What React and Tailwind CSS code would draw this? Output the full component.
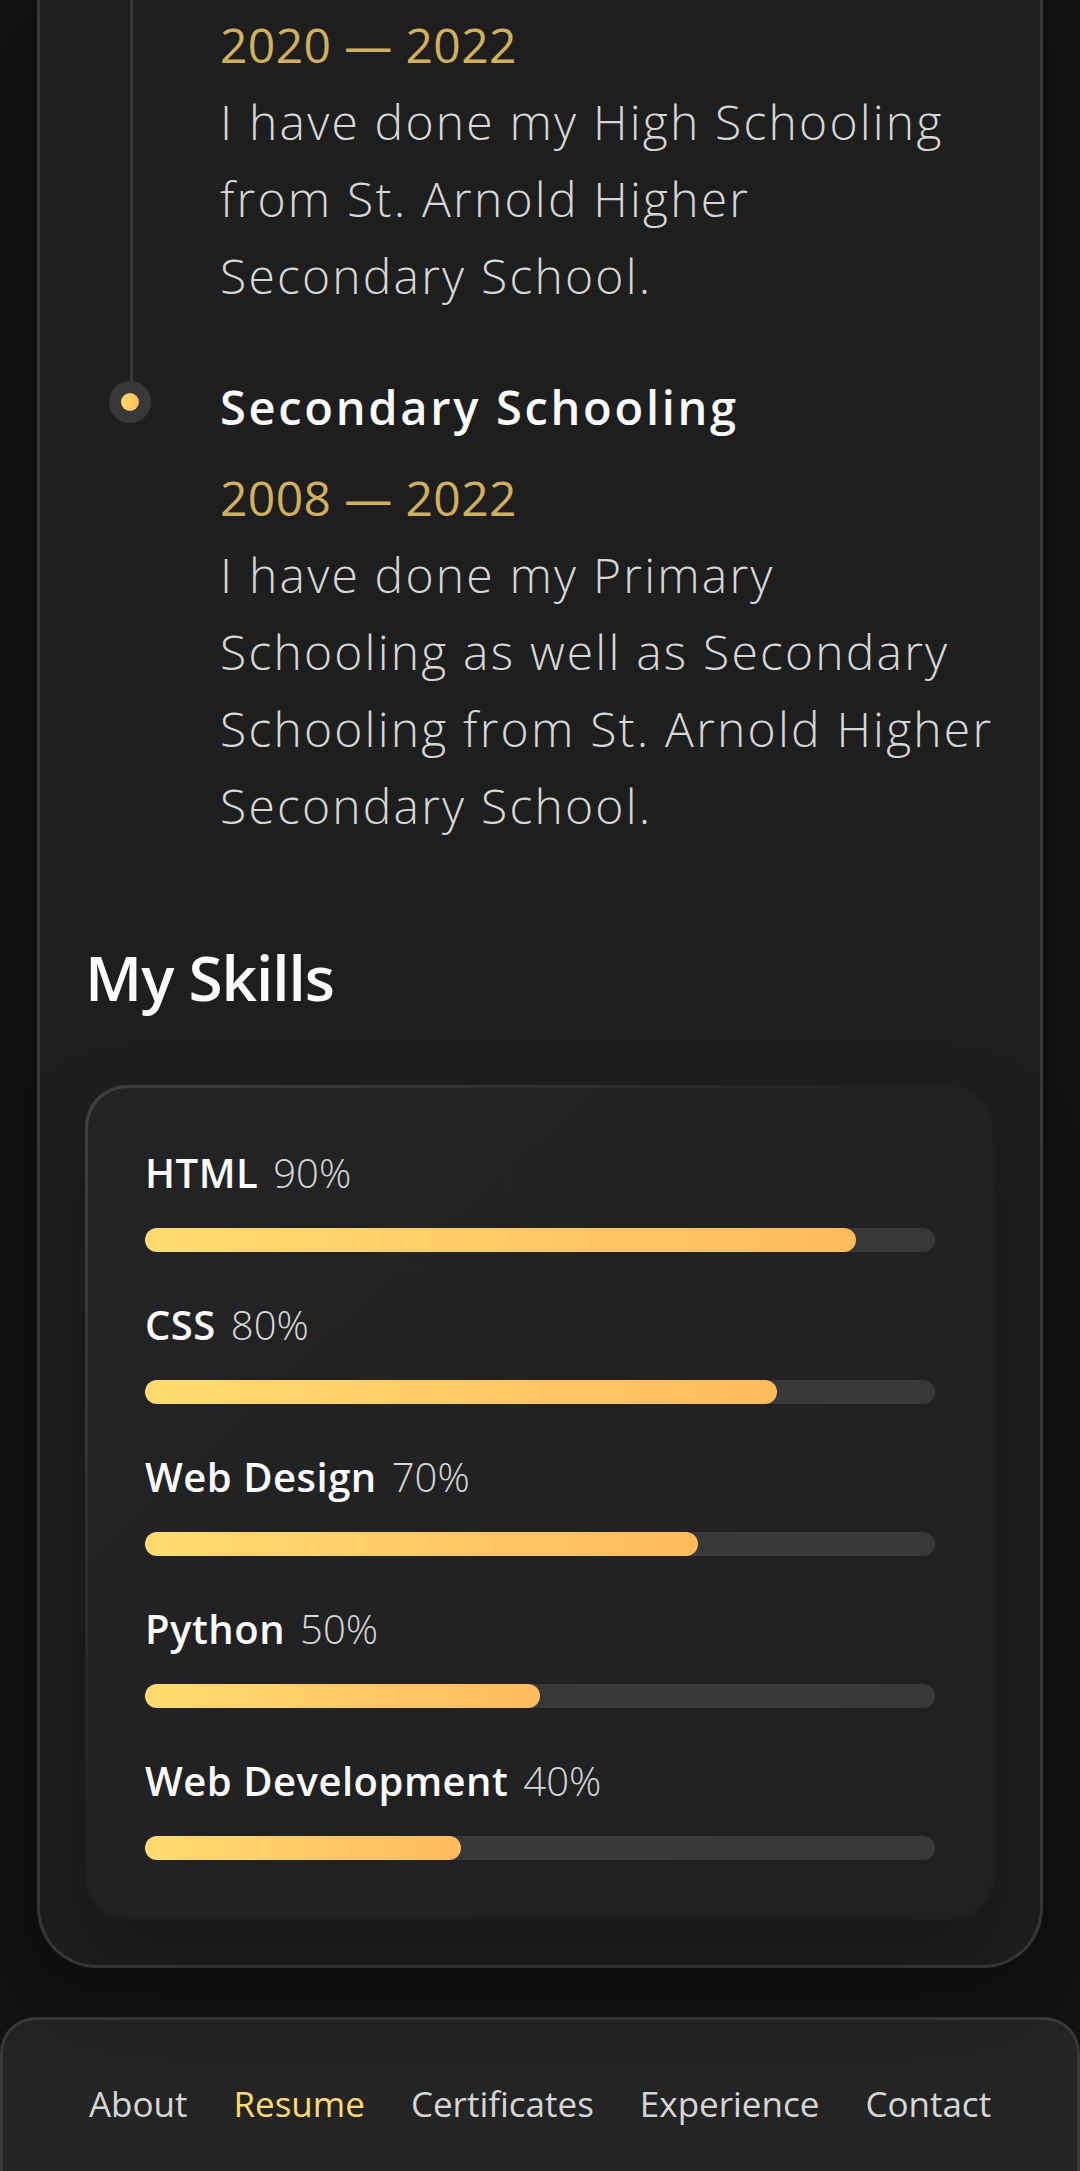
import React from "react";

const skills = [
  { name: "HTML", value: 90 },
  { name: "CSS", value: 80 },
  { name: "Web Design", value: 70 },
  { name: "Python", value: 50 },
  { name: "Web Development", value: 40 },
];

const links = ["About", "Resume", "Certificates", "Experience", "Contact"];

export default function App() {
  return (
    <div className="relative h-[2171px] w-full overflow-hidden bg-[#121212] font-['Open_Sans',sans-serif]">
      <div className="flex flex-col">
        <article className="relative mx-[37px] rounded-b-[60px] border-[3px] border-t-0 border-[#383838] bg-[#1e1e1f] px-[45px] pb-[45px] shadow-[-12px_24px_72px_rgba(0,0,0,0.25)]">
          <section className="mb-[90px]">
            <ol className="ml-[135px]">
              <li className="relative mb-[63px] pt-[6px]">
                <span className="absolute left-[-90px] top-[-75px] h-[calc(100%+150px)] w-[3px] bg-[#383838]" />
                <span className="block text-[48px] leading-[77px] tracking-[0.4px] text-[#ceb15a]">2020 — 2022</span>
                <p className="whitespace-nowrap text-[48px] font-light leading-[77px] tracking-[2.2px] text-[#d6d6d6]">
                  I have done my High Schooling
                  <br />
                  from St. Arnold Higher
                  <br />
                  Secondary School.
                </p>
              </li>
              <li className="relative">
                <span className="absolute left-[-99px] top-[16px] h-[18px] w-[18px] rounded-full bg-[linear-gradient(to_right,#ffdb70,#ffbb5c)] shadow-[0_0_0_12px_#383838]" />
                <h4 className="mb-[21px] text-[47px] font-semibold leading-[61px] tracking-[2.7px] text-[#fafafa]">
                  Secondary Schooling
                </h4>
                <span className="block text-[48px] leading-[77px] tracking-[0.4px] text-[#ceb15a]">2008 — 2022</span>
                <p className="whitespace-nowrap text-[48px] font-light leading-[77px] tracking-[2.2px] text-[#d6d6d6]">
                  I have done my Primary
                  <br />
                  Schooling as well as Secondary
                  <br />
                  Schooling from St. Arnold Higher
                  <br />
                  Secondary School.
                </p>
              </li>
            </ol>
          </section>

          <section>
            <h3 className="mb-[64px] text-[62px] font-semibold leading-[87px] tracking-[-1px] text-[#fafafa]">My Skills</h3>
            <div className="rounded-[42px] bg-[linear-gradient(to_bottom_right,#404040_0%,rgba(64,64,64,0)_50%)] p-[3px] shadow-[0_48px_90px_rgba(0,0,0,0.25)]">
              <ul className="flex flex-col gap-[45px] rounded-[40px] bg-[#202022] bg-[linear-gradient(to_bottom_right,rgba(45,45,46,0.25)_0%,rgba(27,27,29,0)_100%)] p-[57px]">
                {skills.map((s) => (
                  <li key={s.name}>
                    <div className="mb-[27px] flex items-center gap-[15px] leading-[56px]">
                      <h5 className="text-[40px] font-semibold tracking-[0.5px] text-[#fafafa]">{s.name}</h5>
                      <data value={s.value} className="text-[40px] font-light text-[#d6d6d6]">
                        {s.value}%
                      </data>
                    </div>
                    <div className="h-[24px] w-full rounded-[30px] bg-[#383838]">
                      <div
                        className="h-full rounded-[30px] bg-[linear-gradient(to_right,#ffdb70,#ffbb5c)]"
                        style={{ width: `${s.value}%` }}
                      />
                    </div>
                  </li>
                ))}
              </ul>
            </div>
          </section>
        </article>

        <nav className="mt-[49px] h-[200px] rounded-t-[36px] border-[3px] border-b-0 border-[#383838] bg-[rgba(43,43,44,0.75)]">
          <ul className="flex justify-center px-[30px]">
            {links.map((l) => (
              <li key={l}>
                <a
                  href="#"
                  className={`block px-[23px] pt-[59px] text-[35px] leading-[49px] ${
                    l === "Resume" ? "text-[#ffdb70]" : "text-[#d6d6d6]"
                  }`}
                >
                  {l}
                </a>
              </li>
            ))}
          </ul>
        </nav>
      </div>
    </div>
  );
}
